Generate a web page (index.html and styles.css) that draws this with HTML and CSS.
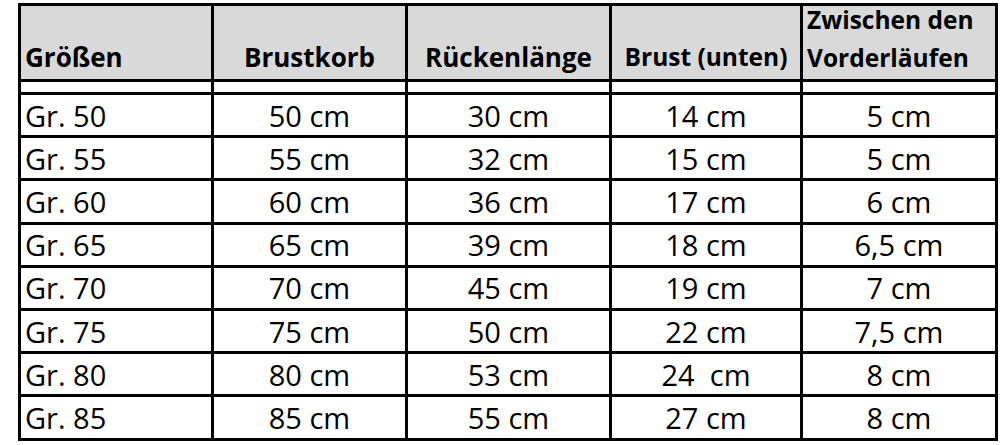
FILE: index.html
```html
<!DOCTYPE html>
<html lang="de">
<head>
<meta charset="utf-8">
<title>Größentabelle</title>
<link rel="stylesheet" href="styles.css">
</head>
<body>
<table class="sizes">
  <colgroup>
    <col class="c1"><col class="c2"><col class="c3"><col class="c4"><col class="c5">
  </colgroup>
  <thead>
    <tr class="head">
      <th class="left">Größen</th>
      <th>Brustkorb</th>
      <th>Rückenlänge</th>
      <th class="small">Brust (unten)</th>
      <th class="small left two"><span class="line first">Zwischen den</span><span class="line">Vorderläufen</span></th>
    </tr>
    <tr class="spacer"><td></td><td></td><td></td><td></td><td></td></tr>
  </thead>
  <tbody>
    <tr><td class="left">Gr. 50</td><td>50 cm</td><td>30 cm</td><td>14 cm</td><td>5 cm</td></tr>
    <tr><td class="left">Gr. 55</td><td>55 cm</td><td>32 cm</td><td>15 cm</td><td>5 cm</td></tr>
    <tr><td class="left">Gr. 60</td><td>60 cm</td><td>36 cm</td><td>17 cm</td><td>6 cm</td></tr>
    <tr><td class="left">Gr. 65</td><td>65 cm</td><td>39 cm</td><td>18 cm</td><td>6,5 cm</td></tr>
    <tr><td class="left">Gr. 70</td><td>70 cm</td><td>45 cm</td><td>19 cm</td><td>7 cm</td></tr>
    <tr><td class="left">Gr. 75</td><td>75 cm</td><td>50 cm</td><td>22 cm</td><td>7,5 cm</td></tr>
    <tr><td class="left">Gr. 80</td><td>80 cm</td><td>53 cm</td><td class="pre">24  cm</td><td>8 cm</td></tr>
    <tr><td class="left">Gr. 85</td><td>85 cm</td><td>55 cm</td><td>27 cm</td><td>8 cm</td></tr>
  </tbody>
</table>
</body>
</html>
```
FILE: styles.css
```css
html, body {
  margin: 0;
  padding: 0;
  background: #ffffff;
}

body {
  font-family: "Open Sans", "Noto Sans", sans-serif;
  color: #000000;
}

.sizes {
  border-collapse: collapse;
  table-layout: fixed;
  margin: 3px 0 0 18px;
}

.c1 { width: 193px; }
.c2 { width: 194px; }
.c3 { width: 204px; }
.c4 { width: 191px; }
.c5 { width: 195px; }

.sizes th,
.sizes td {
  border: 3px solid #000000;
  padding: 0 4px;
  text-align: center;
  overflow: hidden;
  white-space: nowrap;
}

.sizes th {
  background: #d9d9d9;
  font-weight: 700;
  font-size: 26px;
  line-height: 34px;
  vertical-align: bottom;
  padding-bottom: 5px;
}

.sizes th.small {
  font-size: 24.5px;
}

.sizes th.two {
  padding-bottom: 2px;
}

.sizes th.two .line {
  display: block;
  line-height: 38px;
}

.sizes th.two .first {
  margin-top: -6px;
}

.head { height: 76px; }
.spacer { height: 13px; }
.spacer td { background: #ffffff; padding: 0; }

.sizes tbody tr { height: 43.2px; }

.sizes tbody td {
  font-size: 29px;
  line-height: 1;
  vertical-align: middle;
}

.sizes .left { text-align: left; }
.sizes .pre { white-space: pre; }
```
